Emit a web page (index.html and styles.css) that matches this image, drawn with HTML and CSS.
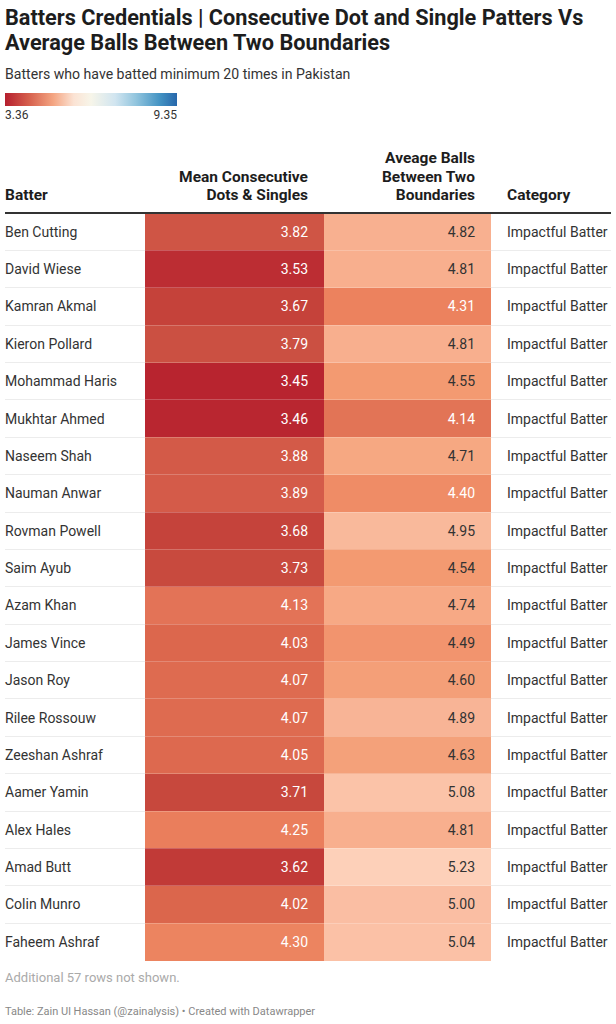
FILE: index.html
```html
<!DOCTYPE html>
<html lang="en">
<head>
<meta charset="utf-8">
<title>Batters Credentials</title>
<link rel="stylesheet" href="styles.css">
</head>
<body>
<div class="chart">
  <h1 class="title">Batters Credentials | Consecutive Dot and Single Patters Vs Average Balls Between Two Boundaries</h1>
  <p class="subtitle">Batters who have batted minimum 20 times in Pakistan</p>
  <div class="legend">
    <div class="legend-bar"></div>
    <div class="legend-labels"><span>3.36</span><span>9.35</span></div>
  </div>
  <table class="data">
    <colgroup>
      <col class="c-name"><col class="c-dots"><col class="c-balls"><col class="c-cat">
    </colgroup>
    <thead>
      <tr>
        <th class="left">Batter</th>
        <th class="right">Mean Consecutive<br>Dots &amp; Singles</th>
        <th class="right">Aveage Balls<br>Between Two<br>Boundaries</th>
        <th class="left cat">Category</th>
      </tr>
    </thead>
    <tbody>
      <tr><td>Ben Cutting</td><td class="num light" style="background:#cf5545">3.82</td><td class="num" style="background:#f8b090">4.82</td><td class="cat">Impactful Batter</td></tr>
      <tr><td>David Wiese</td><td class="num light" style="background:#bc2d33">3.53</td><td class="num" style="background:#f8af8e">4.81</td><td class="cat">Impactful Batter</td></tr>
      <tr><td>Kamran Akmal</td><td class="num light" style="background:#c5423a">3.67</td><td class="num light" style="background:#ec825e">4.31</td><td class="cat">Impactful Batter</td></tr>
      <tr><td>Kieron Pollard</td><td class="num light" style="background:#cb5042">3.79</td><td class="num" style="background:#f8af8e">4.81</td><td class="cat">Impactful Batter</td></tr>
      <tr><td>Mohammad Haris</td><td class="num light" style="background:#b8242f">3.45</td><td class="num" style="background:#f39a71">4.55</td><td class="cat">Impactful Batter</td></tr>
      <tr><td>Mukhtar Ahmed</td><td class="num light" style="background:#b92630">3.46</td><td class="num light" style="background:#e27456">4.14</td><td class="cat">Impactful Batter</td></tr>
      <tr><td>Naseem Shah</td><td class="num light" style="background:#d35a48">3.88</td><td class="num" style="background:#f6a882">4.71</td><td class="cat">Impactful Batter</td></tr>
      <tr><td>Nauman Anwar</td><td class="num light" style="background:#d45b49">3.89</td><td class="num light" style="background:#ef8c66">4.40</td><td class="cat">Impactful Batter</td></tr>
      <tr><td>Rovman Powell</td><td class="num light" style="background:#c5433b">3.68</td><td class="num" style="background:#f9b99b">4.95</td><td class="cat">Impactful Batter</td></tr>
      <tr><td>Saim Ayub</td><td class="num light" style="background:#c84a3e">3.73</td><td class="num" style="background:#f39a71">4.54</td><td class="cat">Impactful Batter</td></tr>
      <tr><td>Azam Khan</td><td class="num light" style="background:#e37357">4.13</td><td class="num" style="background:#f7a985">4.74</td><td class="cat">Impactful Batter</td></tr>
      <tr><td>James Vince</td><td class="num light" style="background:#dc674d">4.03</td><td class="num" style="background:#f2946e">4.49</td><td class="cat">Impactful Batter</td></tr>
      <tr><td>Jason Roy</td><td class="num light" style="background:#de6b50">4.07</td><td class="num" style="background:#f49f78">4.60</td><td class="cat">Impactful Batter</td></tr>
      <tr><td>Rilee Rossouw</td><td class="num light" style="background:#de6b50">4.07</td><td class="num" style="background:#f8b496">4.89</td><td class="cat">Impactful Batter</td></tr>
      <tr><td>Zeeshan Ashraf</td><td class="num light" style="background:#dd694f">4.05</td><td class="num" style="background:#f4a17a">4.63</td><td class="cat">Impactful Batter</td></tr>
      <tr><td>Aamer Yamin</td><td class="num light" style="background:#c7483d">3.71</td><td class="num" style="background:#fbc3a8">5.08</td><td class="cat">Impactful Batter</td></tr>
      <tr><td>Alex Hales</td><td class="num light" style="background:#ea7e5c">4.25</td><td class="num" style="background:#f8af8e">4.81</td><td class="cat">Impactful Batter</td></tr>
      <tr><td>Amad Butt</td><td class="num light" style="background:#c13a37">3.62</td><td class="num" style="background:#fdd0b9">5.23</td><td class="cat">Impactful Batter</td></tr>
      <tr><td>Colin Munro</td><td class="num light" style="background:#db664c">4.02</td><td class="num" style="background:#fabea3">5.00</td><td class="cat">Impactful Batter</td></tr>
      <tr><td>Faheem Ashraf</td><td class="num light" style="background:#ec8460">4.30</td><td class="num" style="background:#fbc1a6">5.04</td><td class="cat">Impactful Batter</td></tr>
    </tbody>
  </table>
  <p class="more">Additional 57 rows not shown.</p>
  <p class="source">Table: Zain Ul Hassan (@zainalysis) • Created with Datawrapper</p>
</div>
</body>
</html>
```

FILE: styles.css
```css
* { box-sizing: border-box; }
html, body { margin: 0; padding: 0; background: #ffffff; }
body {
  font-family: Roboto, "Liberation Sans", Arial, sans-serif;
  color: #333333;
}
.chart {
  padding: 5px 5px 0 5px;
}
.title {
  margin: 0;
  font-size: 21.7px;
  line-height: 25px;
  font-weight: 700;
  color: #1d1d1d;
}
.subtitle {
  margin: 10px 0 0 0;
  font-size: 14.1px;
  line-height: 18px;
  color: #333333;
}
.legend {
  margin-top: 10px;
  width: 172px;
}
.legend-bar {
  height: 13px;
  background: linear-gradient(to right, #b51f2e 0%, #d6604d 14%, #f4a582 28%, #fbe3d4 40%, #f7f5e9 50%, #d1e5f0 64%, #92c5de 76%, #4393c3 90%, #2767ab 100%);
}
.legend-labels {
  margin-top: 2px;
  display: flex;
  justify-content: space-between;
  font-size: 12px;
  line-height: 14px;
  color: #333333;
}
.data {
  margin-top: 23px;
  width: 606px;
  border-collapse: collapse;
  table-layout: fixed;
  font-size: 14px;
}
.c-name { width: 140px; }
.c-dots { width: 179px; }
.c-balls { width: 167px; }
.c-cat { width: 120px; }
.data th {
  font-size: 15.5px;
  font-weight: 700;
  line-height: 18.5px;
  vertical-align: bottom;
  padding: 4px 16px 7px 0;
  color: #1d1d1d;
  border-bottom: 2px solid #333333;
  white-space: nowrap;
}
.data th.left { text-align: left; }
.data th.right { text-align: right; }
.data th.cat { padding-left: 16px; padding-right: 0; }
.data td {
  padding: 8.2px 0;
  line-height: 20px;
  border-bottom: 1px solid #ececec;
  white-space: nowrap;
  color: #333333;
}
.data tbody tr:last-child td { border-bottom: none; padding-bottom: 9.2px; }
.data td.num {
  text-align: right;
  padding-right: 16px;
  border-bottom-color: rgba(255, 255, 255, 0.22);
  color: #333333;
}
.data td.num.light { color: #ffffff; }
.data td.cat { padding-left: 16px; }
.more {
  margin: 8px 0 0 0;
  font-size: 13px;
  line-height: 18px;
  color: #aaaaaa;
}
.source {
  margin: 18px 0 0 0;
  font-size: 11px;
  line-height: 14px;
  color: #888888;
}
```
